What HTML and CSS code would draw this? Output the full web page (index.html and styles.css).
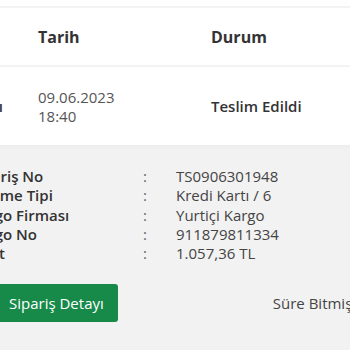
FILE: index.html
```html
<!DOCTYPE html>
<html lang="tr">
<head>
<meta charset="utf-8">
<link rel="stylesheet" href="styles.css">
</head>
<body>
<div class="viewport">
  <div class="inner">
    <div class="row head">
      <div class="c1"></div>
      <div class="c2">Tarih</div>
      <div class="c3">Durum</div>
    </div>
    <div class="row item">
      <div class="c1 strong"><span>Onaylandı</span></div>
      <div class="c2 date">09.06.2023<br>18:40</div>
      <div class="c3 strong">Teslim Edildi</div>
    </div>
    <div class="panel">
      <div class="details">
        <div class="lbl">Sipariş No</div><div class="sep">:</div><div class="val">TS0906301948</div>
        <div class="lbl">Ödeme Tipi</div><div class="sep">:</div><div class="val">Kredi Kartı / 6</div>
        <div class="lbl">Kargo Firması</div><div class="sep">:</div><div class="val">Yurtiçi Kargo</div>
        <div class="lbl">Kargo No</div><div class="sep">:</div><div class="val">911879811334</div>
        <div class="lbl">Fiyat</div><div class="sep">:</div><div class="val">1.057,36 TL</div>
      </div>
      <div class="actions">
        <button class="btn">Sipariş Detayı</button>
        <span class="note">Süre Bitmiş</span>
      </div>
    </div>
  </div>
</div>
</body>
</html>
```
FILE: styles.css
```css
html, body {
  margin: 0;
  padding: 0;
  background: #fff;
}
body {
  font-family: "Open Sans", "Noto Sans", sans-serif;
  color: #333;
}
.viewport {
  width: 350px;
  height: 350px;
  overflow: hidden;
  padding-top: 6px;
  box-sizing: border-box;
}
.inner {
  margin-left: -60px;
  width: 520px;
}
.row {
  display: grid;
  grid-template-columns: 98px 173px 1fr;
  align-items: center;
}
.head {
  border-top: 2px solid #f3f3f3;
  border-bottom: 2px solid #f3f3f3;
  height: 57px;
  font-weight: 700;
  font-size: 16px;
  color: #333;
}
.head .c2, .head .c3 {
  padding-top: 1px;
}
.item {
  height: 78px;
  font-size: 15px;
}
.c1 {
  display: flex;
  justify-content: flex-end;
  padding-right: 35px;
  white-space: nowrap;
}
.strong {
  font-weight: 600;
  color: #333;
}
.date {
  color: #555;
  line-height: 19px;
  padding-top: 1px;
}
.panel {
  background: #f2f2f2;
  box-shadow: inset 0 4px 4px -2px rgba(0, 0, 0, 0.03);
  border-bottom: 1px solid #e6e6e6;
  padding: 22px 0 24px;
  height: 178px;
}
.details {
  display: grid;
  grid-template-columns: 173px 33px 1fr;
  padding-left: 30px;
  font-size: 15px;
  line-height: 19.3px;
}
.lbl {
  font-weight: 600;
  color: #333;
  white-space: nowrap;
}
.sep {
  color: #666;
}
.val {
  color: #444;
}
.actions {
  display: flex;
  align-items: center;
  margin-top: 21px;
  padding-left: 55px;
  gap: 155px;
}
.btn {
  font-family: "Open Sans", "Noto Sans", sans-serif;
  font-size: 15px;
  color: #fff;
  background: #178a4a;
  border: none;
  border-radius: 3px;
  height: 38px;
  padding: 0 14px;
  white-space: nowrap;
}
.note {
  font-size: 15px;
  color: #444;
  white-space: nowrap;
}
```
